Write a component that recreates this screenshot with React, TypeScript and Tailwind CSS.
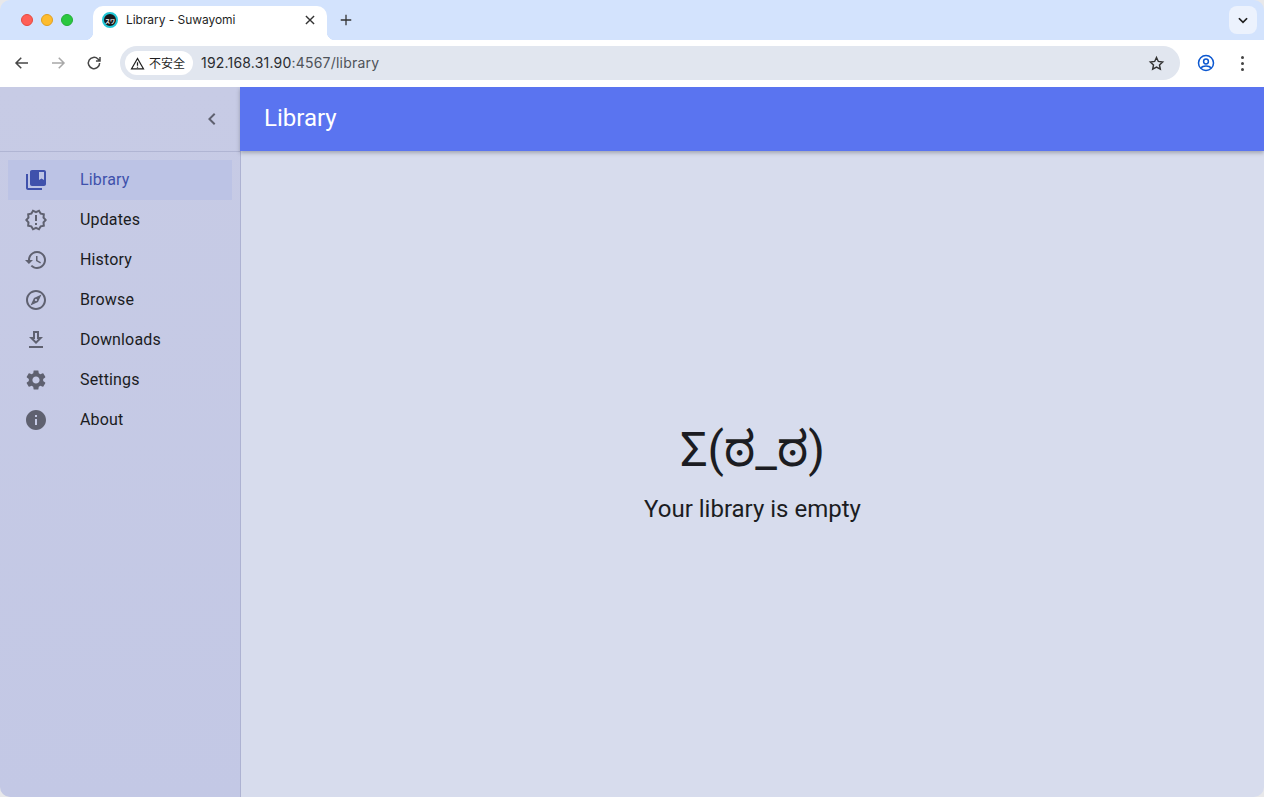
import type { ReactNode } from 'react';

const ui = '"Inter", "Liberation Sans", "Noto Sans CJK SC", sans-serif';
const roboto = 'Roboto, "Noto Sans", sans-serif';

function Icon({ d, className }: { d: string; className: string }) {
    return (
        <svg viewBox="0 0 24 24" fill="currentColor" className={className}>
            <path d={d} />
        </svg>
    );
}

const navItems = [
    {
        label: 'Library',
        d: 'M4 6H2v14c0 1.1.9 2 2 2h14v-2H4V6z M20 2H8c-1.1 0-2 .9-2 2v12c0 1.1.9 2 2 2h12c1.1 0 2-.9 2-2V4c0-1.1-.9-2-2-2zm0 10l-2.5-1.5L15 12V4h5v8z',
    },
    {
        label: 'Updates',
        d: 'm23 12-2.44-2.78.34-3.68-3.61-.82-1.89-3.18L12 3 8.6 1.54 6.71 4.72l-3.61.81.34 3.68L1 12l2.44 2.78-.34 3.69 3.61.82 1.89 3.18L12 21l3.4 1.46 1.89-3.18 3.61-.82-.34-3.68L23 12zm-4.51 2.11.26 2.79-2.74.62-1.43 2.41L12 18.81l-2.58 1.11-1.43-2.41-2.74-.62.26-2.8L3.66 12l1.85-2.12-.26-2.78 2.74-.61 1.43-2.41L12 5.19l2.58-1.11 1.43 2.41 2.74.62-.26 2.79L20.34 12l-1.85 2.11zM11 15h2v2h-2zm0-8h2v6h-2z',
    },
    {
        label: 'History',
        d: 'M13 3c-4.97 0-9 4.03-9 9H1l3.89 3.89.07.14L9 12H6c0-3.87 3.13-7 7-7s7 3.13 7 7-3.13 7-7 7c-1.93 0-3.68-.79-4.94-2.06l-1.42 1.42C8.27 19.99 10.51 21 13 21c4.97 0 9-4.03 9-9s-4.03-9-9-9zm-1 5v5l4.28 2.54.72-1.21-3.5-2.08V8H12z',
    },
    {
        label: 'Browse',
        d: 'M12 2C6.48 2 2 6.48 2 12s4.48 10 10 10 10-4.48 10-10S17.52 2 12 2zm0 18c-4.41 0-8-3.59-8-8s3.59-8 8-8 8 3.59 8 8-3.59 8-8 8zm-5.5-2.5 7.51-3.49L17.5 6.5 9.99 9.99 6.5 17.5zm5.5-6.6c.61 0 1.1.49 1.1 1.1s-.49 1.1-1.1 1.1-1.1-.49-1.1-1.1.49-1.1 1.1-1.1z',
    },
    {
        label: 'Downloads',
        d: 'M19 9h-4V3H9v6H5l7 7 7-7zm-8 2V5h2v6h1.17L12 13.17 9.83 11H11zm-6 7h14v2H5z',
    },
    {
        label: 'Settings',
        d: 'M19.14 12.94c.04-.3.06-.61.06-.94 0-.32-.02-.64-.07-.94l2.03-1.58c.18-.14.23-.41.12-.61l-1.92-3.32c-.12-.22-.37-.29-.59-.22l-2.39.96c-.5-.38-1.03-.7-1.62-.94l-.36-2.54c-.04-.24-.24-.41-.48-.41h-3.84c-.24 0-.43.17-.47.41l-.36 2.54c-.59.24-1.13.57-1.62.94l-2.39-.96c-.22-.08-.47 0-.59.22L2.74 8.87c-.12.21-.08.47.12.61l2.03 1.58c-.05.3-.09.63-.09.94s.02.64.07.94l-2.03 1.58c-.18.14-.23.41-.12.61l1.92 3.32c.12.22.37.29.59.22l2.39-.96c.5.38 1.03.7 1.62.94l.36 2.54c.05.24.24.41.48.41h3.84c.24 0 .44-.17.47-.41l.36-2.54c.59-.24 1.13-.56 1.62-.94l2.39.96c.22.08.47 0 .59-.22l1.92-3.32c.12-.22.07-.47-.12-.61l-2.01-1.58zM12 15.6c-1.98 0-3.6-1.62-3.6-3.6s1.62-3.6 3.6-3.6 3.6 1.62 3.6 3.6-1.62 3.6-3.6 3.6z',
    },
    {
        label: 'About',
        d: 'M12 2C6.48 2 2 6.48 2 12s4.48 10 10 10 10-4.48 10-10S17.52 2 12 2zm1 15h-2v-6h2v6zm0-8h-2V7h2v2z',
    },
];

function ToolButton({ children }: { children: ReactNode }) {
    return <div className="w-[36px] h-[36px] flex items-center justify-center text-[#474747]">{children}</div>;
}

function TabStrip() {
    return (
        <div className="h-[40px] flex bg-[#d3e3fd] rounded-t-[10px] pt-[6px]">
            {/* Traffic lights */}
            <div className="w-[93px] pt-[8px] pl-[21px] flex gap-[8px] shrink-0">
                <span className="w-[12px] h-[12px] rounded-full bg-[#ff5f57] border border-[#e5493f]" />
                <span className="w-[12px] h-[12px] rounded-full bg-[#febc2e] border border-[#e0a020]" />
                <span className="w-[12px] h-[12px] rounded-full bg-[#2ac840] border border-[#24ae37]" />
            </div>

            {/* Active tab */}
            <div className="relative w-[234px] h-[34px] bg-white rounded-t-[10px] flex items-center pl-[9px] pr-[10px] pb-[6px] shrink-0">
                <span className="absolute left-[-8px] bottom-0 w-[8px] h-[8px] bg-[radial-gradient(circle_at_0_0,#d3e3fd_8px,#ffffff_8.5px)]" />
                <span className="absolute right-[-8px] bottom-0 w-[8px] h-[8px] bg-[radial-gradient(circle_at_100%_0,#d3e3fd_8px,#ffffff_8.5px)]" />
                <span className="w-[16px] h-[16px] rounded-full bg-[#18181b] border-[2px] border-[#22c7d6] flex items-center justify-center text-white text-[5px] font-bold leading-none" style={{ fontFamily: '"Noto Sans CJK JP", sans-serif' }}>
                    スワ
                </span>
                <span className="ml-[8px] text-[12px] tracking-[-0.05px] text-[#1f1f1f]" style={{ fontFamily: ui }}>
                    Library - Suwayomi
                </span>
                <svg viewBox="0 0 24 24" className="ml-auto w-[14px] h-[14px] text-[#333]" fill="none" stroke="currentColor" strokeWidth="2.4">
                    <path d="M5 5l14 14M19 5L5 19" />
                </svg>
            </div>

            <div className="w-[38px] h-[28px] flex items-center justify-center text-[#333] shrink-0">
                <svg viewBox="0 0 24 24" className="w-[14px] h-[14px]" fill="none" stroke="currentColor" strokeWidth="2.2">
                    <path d="M12 3v18M3 12h18" />
                </svg>
            </div>

            <div className="ml-auto mr-[7px] w-[28px] h-[28px] rounded-[8px] bg-[#ecf2fd] flex items-center justify-center text-[#1f1f1f]">
                <svg viewBox="0 0 24 24" className="w-[14px] h-[14px]" fill="none" stroke="currentColor" strokeWidth="3">
                    <path d="M5 9l7 7 7-7" />
                </svg>
            </div>
        </div>
    );
}

function Toolbar() {
    return (
        <div className="h-[47px] bg-white flex items-center pl-[4px] pr-[4px] pb-[1px]">
            <ToolButton>
                <svg viewBox="0 0 24 24" className="w-[18px] h-[18px]" fill="none" stroke="currentColor" strokeWidth="2">
                    <path d="M20 12H5M11 5l-7 7 7 7" />
                </svg>
            </ToolButton>
            <div className="w-[36px] h-[36px] flex items-center justify-center text-[#a8a8a8]">
                <svg viewBox="0 0 24 24" className="w-[18px] h-[18px]" fill="none" stroke="currentColor" strokeWidth="2">
                    <path d="M4 12h15M13 5l7 7-7 7" />
                </svg>
            </div>
            <ToolButton>
                <svg viewBox="0 0 24 24" className="w-[18px] h-[18px]" fill="none" stroke="currentColor" strokeWidth="2">
                    <path d="M19.5 12a7.5 7.5 0 1 1-2.2-5.3L20 9.4M20 4v5.4h-5.4" />
                </svg>
            </ToolButton>

            {/* Address bar */}
            <div className="ml-[8px] w-[1060px] h-[34px] rounded-full bg-[#e1e6ef] flex items-center pl-[5px] pr-[15px]">
                <div className="h-[24px] w-[68px] rounded-full bg-white flex items-center pl-[5px] gap-[4px] text-[#1f1f1f]">
                    <svg viewBox="0 0 24 24" className="w-[15px] h-[15px]" fill="none" stroke="currentColor" strokeWidth="2">
                        <path d="M12 4L2.5 20.5h19zM12 10v5.5M12 17v1.6" />
                    </svg>
                    <span className="text-[12px] leading-none" style={{ fontFamily: '"Noto Sans CJK SC", sans-serif' }}>不安全</span>
                </div>
                <span className="ml-[8px] mb-[1px] text-[14px] tracking-[0.2px] text-[#2a2c30]" style={{ fontFamily: ui }}>
                    192.168.31.90<span className="text-[#4f5359]">:4567/library</span>
                </span>
                <svg viewBox="0 0 24 24" className="ml-auto w-[17px] h-[17px] text-[#333]" fill="none" stroke="currentColor" strokeWidth="2">
                    <path d="M12 3.5l2.6 5.6 6.1.7-4.5 4.2 1.2 6-5.4-3-5.4 3 1.2-6-4.5-4.2 6.1-.7z" />
                </svg>
            </div>

            <div className="ml-[8px] w-[36px] h-[36px] flex items-center justify-center text-[#0b57d0]">
                <svg viewBox="0 0 24 24" className="w-[18px] h-[18px]" fill="none" stroke="currentColor" strokeWidth="2">
                    <circle cx="12" cy="12" r="10" />
                    <circle cx="12" cy="10" r="3.2" />
                    <path d="M5.5 18.5c2-3.4 11-3.4 13 0" />
                </svg>
            </div>
            <div className="w-[36px] h-[36px] flex flex-col items-center justify-center gap-[3px]">
                <span className="w-[3px] h-[3px] rounded-full bg-[#444]" />
                <span className="w-[3px] h-[3px] rounded-full bg-[#444]" />
                <span className="w-[3px] h-[3px] rounded-full bg-[#444]" />
            </div>
        </div>
    );
}

function Sidebar() {
    return (
        <aside className="w-[241px] shrink-0 border-r border-[#adb2d2] bg-gradient-to-b from-[#c7cbe5] to-[#c3c8e5]">
            <div className="h-[65px] border-b border-[#b0b5d3] flex items-center justify-end pr-[16px] text-[#5f6170]">
                <Icon d="M15.41 7.41L14 6l-6 6 6 6 1.41-1.41L10.83 12z" className="w-[24px] h-[24px]" />
            </div>
            <nav className="pt-[8px] flex flex-col">
                {navItems.map((item, idx) => (
                    <div
                        key={item.label}
                        className={`mx-[8px] h-[40px] flex items-center pl-[16px] ${idx === 0 ? 'bg-[#bcc3e5] text-[#3f51ac]' : 'text-[#5f6170]'}`}
                    >
                        <Icon d={item.d} className="w-[24px] h-[24px]" />
                        <span
                            className={`ml-[32px] text-[16px] tracking-[0.15px] ${idx === 0 ? 'text-[#3f51ac]' : 'text-[#1b1c22]'}`}
                            style={{ fontFamily: roboto }}
                        >
                            {item.label}
                        </span>
                    </div>
                ))}
            </nav>
        </aside>
    );
}

export default function App() {
    return (
        <div className="w-[1264px] h-[797px] overflow-hidden bg-[#e8e8ea] flex flex-col">
            <TabStrip />
            <Toolbar />
            <div className="flex-1 flex min-h-0 rounded-b-[10px] overflow-hidden">
                <Sidebar />
                <main className="flex-1 bg-[#d7dced] flex flex-col relative">
                    <header className="absolute top-0 left-[-1px] right-0 h-[64px] bg-[#5a74f0] shadow-[0_2px_4px_rgba(0,0,0,0.25)] flex items-center pl-[24px] pb-[2px]">
                        <h1 className="text-[24px] leading-none text-white" style={{ fontFamily: roboto }}>Library</h1>
                    </header>
                    <div className="flex-1 flex flex-col items-center text-[#1b1c22] pt-[331px]" style={{ fontFamily: roboto }}>
                        <div className="text-[48px] leading-[64px]" style={{ fontFamily: 'Roboto, "Noto Sans Kannada", "Noto Sans", "DejaVu Sans", sans-serif' }}>Σ(ಠ_ಠ)</div>
                        <div className="text-[24px] leading-[32px] mt-[11px]">Your library is empty</div>
                    </div>
                </main>
            </div>
        </div>
    );
}
